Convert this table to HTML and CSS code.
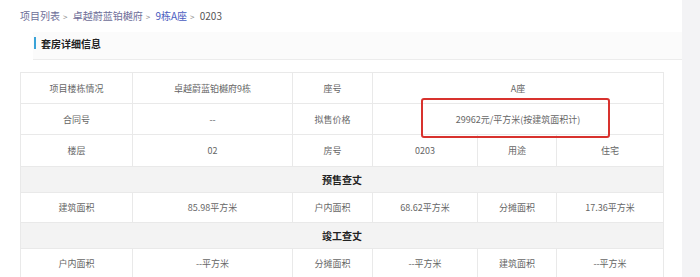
FILE: index.html
```html
<!DOCTYPE html>
<html lang="zh">
<head>
<meta charset="utf-8">
<link rel="stylesheet" href="styles.css">
</head>
<body>
<div class="page">
  <main class="card">
    <nav class="crumbs">
      <a class="crumb">项目列表</a><span class="sep">&gt;</span>
      <a class="crumb">卓越蔚蓝铂樾府</a><span class="sep">&gt;</span>
      <a class="crumb crumb-active">9栋A座</a><span class="sep">&gt;</span>
      <span class="crumb-current">0203</span>
    </nav>
    <div class="section-title"><span class="bar"></span><h2>套房详细信息</h2></div>
    <table class="info">
      <colgroup>
        <col class="c1"><col class="c2"><col class="c3"><col class="c4"><col class="c5"><col class="c6">
      </colgroup>
      <tr class="r31">
        <td>项目楼栋情况</td><td>卓越蔚蓝铂樾府9栋</td><td>座号</td><td colspan="3">A座</td>
      </tr>
      <tr class="r31">
        <td>合同号</td><td>--</td><td>拟售价格</td>
        <td colspan="3" class="price"><div class="price-wrap">29962元/平方米(按建筑面积计)<span class="highlight"></span></div></td>
      </tr>
      <tr class="r32">
        <td>楼层</td><td>02</td><td>房号</td><td>0203</td><td>用途</td><td>住宅</td>
      </tr>
      <tr class="head">
        <th colspan="6">预售查丈</th>
      </tr>
      <tr class="r30">
        <td>建筑面积</td><td>85.98平方米</td><td>户内面积</td><td>68.62平方米</td><td>分摊面积</td><td>17.36平方米</td>
      </tr>
      <tr class="head">
        <th colspan="6">竣工查丈</th>
      </tr>
      <tr class="r30">
        <td>户内面积</td><td>--平方米</td><td>分摊面积</td><td>--平方米</td><td>建筑面积</td><td>--平方米</td>
      </tr>
    </table>
  </main>
  <aside class="side"></aside>
</div>
</body>
</html>
```

FILE: styles.css
```css
* { box-sizing: border-box; }
html, body { margin: 0; padding: 0; }
body {
  font-family: "Noto Sans CJK SC", "Noto Sans", sans-serif;
  background: #ffffff;
  height: 277px;
  overflow: hidden;
}
.page {
  display: flex;
  height: 277px;
}
.card {
  width: 682px;
  flex: none;
  background: #fff;
  padding-left: 5px;
}
.side {
  flex: 1;
  background: #f3f3f5;
}
.crumbs {
  height: 32px;
  padding: 9px 0 0 15px;
  font-size: 10px;
  line-height: 14px;
  color: #555;
  white-space: nowrap;
}
.crumb { color: #6e6e98; text-decoration: none; }
.crumb-active { color: #4a5cc0; }
.sep { color: #888; margin: 0 3px; font-size: 8px; }
.crumb-current { color: #555; }
.section-title {
  margin-left: 28px;
  height: 28px;
  background: #fbfbfb;
  border-bottom: 1px solid #ececec;
  display: flex;
  align-items: center;
  padding-left: 1px;
  padding-bottom: 5px;
}
.bar {
  width: 2px;
  height: 12px;
  background: #3aa3d8;
  margin-right: 5px;
}
.section-title h2 {
  margin: 0;
  font-size: 10px;
  font-weight: bold;
  color: #222;
}
.info {
  margin: 12px 0 0 15px;
  width: 643px;
  border-collapse: collapse;
  table-layout: fixed;
  font-size: 9px;
  color: #666;
}
.c1 { width: 112px; }
.c2 { width: 160px; }
.c3 { width: 80px; }
.c4 { width: 105px; }
.c5 { width: 79px; }
.c6 { width: 107px; }
.info td, .info th {
  border: 1px solid #e9e9e9;
  text-align: center;
  padding: 0;
  vertical-align: middle;
}
.r31 td { height: 31px; }
.r32 td { height: 32px; }
.r30 td { height: 30px; }
.head th {
  height: 26px;
  background: #f3f3f3;
  font-size: 10px;
  font-weight: bold;
  color: #222;
}
.price-wrap { position: relative; }
.highlight {
  position: absolute;
  left: 48px;
  top: -15px;
  width: 189px;
  height: 40px;
  border: 2px solid #d8322e;
  border-radius: 3px;
}
```
